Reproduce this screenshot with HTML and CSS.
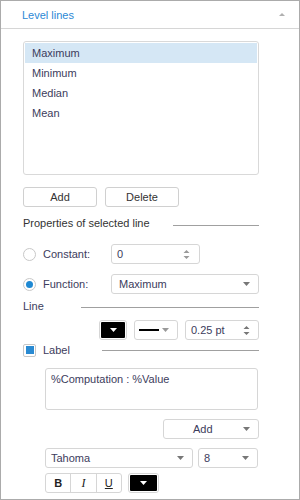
FILE: index.html
```html
<!DOCTYPE html>
<html lang="en">
  <head>
    <meta charset="UTF-8" />
    <title>Level lines</title>
    <link rel="stylesheet" href="styles.css">
  </head>
  <body>
    <div class="panel">
      <!-- header -->
      <div class="panel-header">
        <span class="panel-title">Level lines</span>
        <svg class="collapse-icon" width="6" height="4" viewBox="0 0 6 4"><path d="M0 4 L3 1 L6 4 Z" fill="#b0b0b0"/></svg>
      </div>

      <div class="panel-body">
        <ul class="line-list">
          <li class="selected">Maximum</li>
          <li>Minimum</li>
          <li>Median</li>
          <li>Mean</li>
        </ul>

        <div class="button-row">
          <button class="btn">Add</button>
          <button class="btn">Delete</button>
        </div>

        <div class="group-title">
          <span class="props-label">Properties of selected line</span>
          <span class="rule rule-low"></span>
        </div>

        <div class="option-row">
          <span class="radio"></span>
          <span class="option-label">Constant:</span>
          <div class="field spin-value">
            <span>0</span>
            <svg class="spin-arrows" width="7" height="11" viewBox="0 0 7 11"><path d="M0.5 4 L3.5 1 L6.5 4 Z M0.5 7 L3.5 10 L6.5 7 Z" fill="#9a9a9a"/></svg>
          </div>
        </div>

        <div class="option-row function-row">
          <span class="radio checked"></span>
          <span class="option-label">Function:</span>
          <div class="field select-function">
            <span>Maximum</span>
            <svg class="drop-arrow" width="7" height="4" viewBox="0 0 7 4"><path d="M0 0 L7 0 L3.5 4 Z" fill="#777"/></svg>
          </div>
        </div>

        <div class="group-title line-title">
          <span class="line-label">Line</span>
          <span class="rule rule-mid"></span>
        </div>

        <div class="tools-row">
          <div class="color-btn">
            <svg width="7" height="4" viewBox="0 0 7 4"><path d="M0 0 L7 0 L3.5 4 Z" fill="#fff"/></svg>
          </div>
          <div class="field style-select">
            <span class="line-sample"></span>
            <svg class="drop-arrow" width="7" height="4" viewBox="0 0 7 4"><path d="M0 0 L7 0 L3.5 4 Z" fill="#999"/></svg>
          </div>
          <div class="field spin-pt">
            <span>0.25 pt</span>
            <svg class="spin-arrows" width="7" height="11" viewBox="0 0 7 11"><path d="M0.5 4 L3.5 1 L6.5 4 Z M0.5 7 L3.5 10 L6.5 7 Z" fill="#777"/></svg>
          </div>
        </div>

        <div class="group-title label-title">
          <span class="checkbox"></span>
          <span class="check-label">Label</span>
          <span class="rule"></span>
        </div>

        <div class="label-text">%Computation : %Value</div>

        <div class="field add-select">
          <span>Add</span>
          <svg class="drop-arrow" width="7" height="4" viewBox="0 0 7 4"><path d="M0 0 L7 0 L3.5 4 Z" fill="#777"/></svg>
        </div>

        <div class="font-row">
          <div class="field font-select">
            <span>Tahoma</span>
            <svg class="drop-arrow" width="7" height="4" viewBox="0 0 7 4"><path d="M0 0 L7 0 L3.5 4 Z" fill="#777"/></svg>
          </div>
          <div class="field size-select">
            <span>8</span>
            <svg class="drop-arrow" width="7" height="4" viewBox="0 0 7 4"><path d="M0 0 L7 0 L3.5 4 Z" fill="#777"/></svg>
          </div>
        </div>

        <div class="format-row">
          <div class="format-group">
            <span class="fmt fmt-bold">B</span>
            <span class="fmt fmt-italic">I</span>
            <span class="fmt fmt-under">U</span>
          </div>
          <div class="color-btn font-color">
            <svg width="7" height="4" viewBox="0 0 7 4"><path d="M0 0 L7 0 L3.5 4 Z" fill="#fff"/></svg>
          </div>
        </div>
      </div>
    </div>
  </body>
</html>
```

FILE: styles.css
```css
* {
  box-sizing: border-box;
}
body {
  margin: 0;
  font-family: "Liberation Sans", Arial, sans-serif;
  font-size: 11px;
  color: #3c3c5c;
}
.panel {
  width: 300px;
  height: 500px;
  border: 1px solid #ababab;
  background: #fff;
}
.panel-header {
  height: 28px;
  border-bottom: 1px solid #d6d6d6;
  display: flex;
  align-items: center;
  justify-content: space-between;
  padding: 0 14px 0 21px;
}
.panel-title {
  color: #2b88d5;
  font-size: 11px;
}
.collapse-icon {
  margin-top: -1px;
}
.panel-body {
  padding: 12px 40px 0 22px;
}

/* list of lines */
.line-list {
  list-style: none;
  margin: 0;
  padding: 1px;
  height: 134px;
  border: 1px solid #d9d9d9;
  border-radius: 3px;
}
.line-list li {
  height: 20px;
  line-height: 20px;
  padding-left: 7px;
}
.line-list li.selected {
  background: #d5e7f5;
}

.button-row {
  display: flex;
  gap: 8px;
  margin-top: 12px;
}
.btn {
  width: 74px;
  height: 20px;
  padding: 0;
  border: 1px solid #d0d0d0;
  border-radius: 3px;
  background: #fff;
  font-family: inherit;
  font-size: 11px;
  color: #333;
}

/* group title with rule */
.group-title {
  display: flex;
  align-items: center;
  height: 14px;
  margin-top: 9px;
}
.props-label {
  width: 150px;
  color: #333;
}
.line-label {
  width: 58px;
}
.rule {
  flex: 1;
  height: 1px;
  background: #a0a0a0;
}
.rule-low {
  margin-top: 5px;
}
.rule-mid {
  margin-top: 2px;
}
.line-title {
  margin-top: 5px;
}
.label-title {
  margin-top: 3px;
}
.checkbox {
  width: 13px;
  height: 13px;
  border: 1px solid #c8c8c8;
  border-radius: 2px;
  display: flex;
  align-items: center;
  justify-content: center;
}
.checkbox::after {
  content: "";
  width: 8px;
  height: 8px;
  background: #2a8ad2;
}
.check-label {
  width: 59px;
  margin-left: 7px;
}

/* radio rows */
.option-row {
  display: flex;
  align-items: center;
  height: 20px;
  margin-top: 14px;
}
.function-row {
  margin-top: 10px;
}
.radio {
  width: 13px;
  height: 13px;
  border: 1px solid #c8c8c8;
  border-radius: 50%;
  display: flex;
  align-items: center;
  justify-content: center;
}
.radio.checked::after {
  content: "";
  width: 7px;
  height: 7px;
  border-radius: 50%;
  background: #1f89d3;
}
.option-label {
  width: 68px;
  margin-left: 7px;
}

/* inputs */
.field {
  display: flex;
  align-items: center;
  justify-content: space-between;
  height: 20px;
  border: 1px solid #d6d6d6;
  border-radius: 3px;
  padding: 0 8px 0 5px;
  background: #fff;
}
.spin-value {
  width: 89px;
  padding-right: 9px;
}
.select-function {
  flex: 1;
  padding-left: 7px;
}
.spin-arrows {
  display: block;
}

.tools-row {
  display: flex;
  justify-content: flex-end;
  gap: 7px;
  height: 20px;
  margin-top: 7px;
}
.color-btn {
  width: 28px;
  height: 20px;
  border: 1px solid #d6d6d6;
  border-radius: 3px;
  padding: 1px;
  background: #000;
  background-clip: content-box;
  display: flex;
  align-items: center;
  justify-content: center;
}
.style-select {
  width: 44px;
  padding-left: 4px;
}
.line-sample {
  width: 20px;
  height: 2px;
  background: #000;
}
.spin-pt {
  width: 74px;
}

.label-text {
  width: 213px;
  height: 42px;
  margin: 11px 0 0 22px;
  border: 1px solid #d6d6d6;
  border-radius: 3px;
  padding: 3px 5px;
  line-height: 14px;
}

.add-select {
  width: 96px;
  margin: 9px 0 0 auto;
  padding-left: 29px;
}

.font-row {
  display: flex;
  gap: 5px;
  margin: 9px 0 0 22px;
}
.font-select {
  width: 148px;
}
.size-select {
  width: 60px;
}

.format-row {
  display: flex;
  gap: 6px;
  margin: 5px 0 0 22px;
}
.format-group {
  display: flex;
  width: 77px;
  height: 20px;
  border: 1px solid #d6d6d6;
  border-radius: 3px;
}
.fmt {
  flex: 1;
  display: flex;
  align-items: center;
  justify-content: center;
  color: #222;
  border-left: 1px solid #d6d6d6;
}
.fmt:first-child {
  border-left: none;
}
.fmt-bold {
  font-weight: bold;
}
.fmt-italic {
  font-family: "Liberation Serif", serif;
  font-style: italic;
  font-size: 12px;
}
.fmt-under {
  text-decoration: underline;
}
.font-color {
  width: 31px;
}
```
